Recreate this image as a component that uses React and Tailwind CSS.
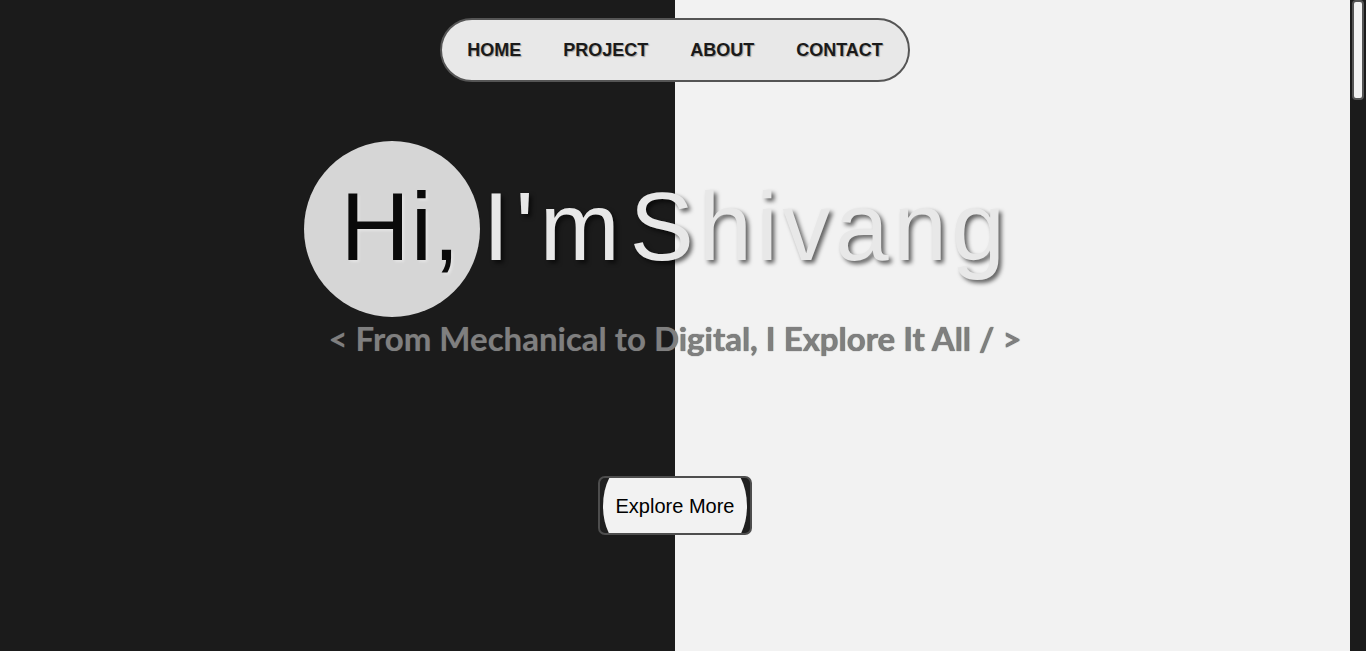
import React from "react";

export default function App() {
  return (
    <div className="flex h-[651px] w-full overflow-hidden bg-[#1b1b1b]">
      <main className="relative flex h-full w-[1350px] flex-col items-center bg-[linear-gradient(to_right,#1b1b1b_0,#1b1b1b_675px,#f2f2f2_675px,#f2f2f2_100%)] font-['Liberation_Sans',Arial,sans-serif]">
        <nav className="mt-[18px] flex h-[64px] items-center gap-[42px] rounded-full border-2 border-[#555555] bg-[#e8e8e8] px-[25px] text-[18px] font-bold text-[#1a1a1a] [text-shadow:1px_1px_1px_rgba(0,0,0,0.3)]">
          <a className="cursor-pointer">HOME</a>
          <a className="cursor-pointer">PROJECT</a>
          <a className="cursor-pointer">ABOUT</a>
          <a className="cursor-pointer">CONTACT</a>
        </nav>

        <div className="relative mt-[97px] w-full">
          <div className="absolute left-[304px] top-[-38px] h-[176px] w-[176px] rounded-full bg-[#d6d6d6]" />
          <h1 className="relative flex justify-center text-[96px] leading-[96px] font-normal">
            <span className="tracking-[1px] text-[#0a0a0a] [text-shadow:2px_2px_3px_rgba(255,255,255,0.35)]">Hi,</span>
            <span className="ml-[22px] tracking-[6px] text-[#e8e8e8] [text-shadow:3px_3px_4px_rgba(0,0,0,0.6)]">I'm</span>
            <span className="ml-[4px] tracking-[4.7px] text-[#e8e8e8] [text-shadow:3px_3px_4px_rgba(0,0,0,0.6)]">Shivang</span>
          </h1>
        </div>

        <p className="mt-[43px] font-['Lato','Noto_Sans',sans-serif] text-[33px] leading-[40px] font-bold text-[#7f7f7f] [text-shadow:0_0_1px_#4a4a4a]">
          &lt; From Mechanical to Digital, I Explore It All / &gt;
        </p>

        <button className="mt-[118px] flex h-[59px] w-[154px] items-center justify-center overflow-hidden rounded-[7px] border-2 border-[#4e4e4e] bg-[#1f1f1f]">
          <span className="mx-[3px] flex h-[80px] shrink-0 flex-1 items-center justify-center rounded-[22px/50%] bg-[#f2f2f2] text-[20px] text-black">
            Explore More
          </span>
        </button>
      </main>
      <div className="relative h-full w-[16px] bg-[#1b1b1b]">
        <div className="ml-[2px] h-[100px] w-[12px] rounded-[4px] border-2 border-[#555555] bg-[#f2f2f2]" />
      </div>
    </div>
  );
}
